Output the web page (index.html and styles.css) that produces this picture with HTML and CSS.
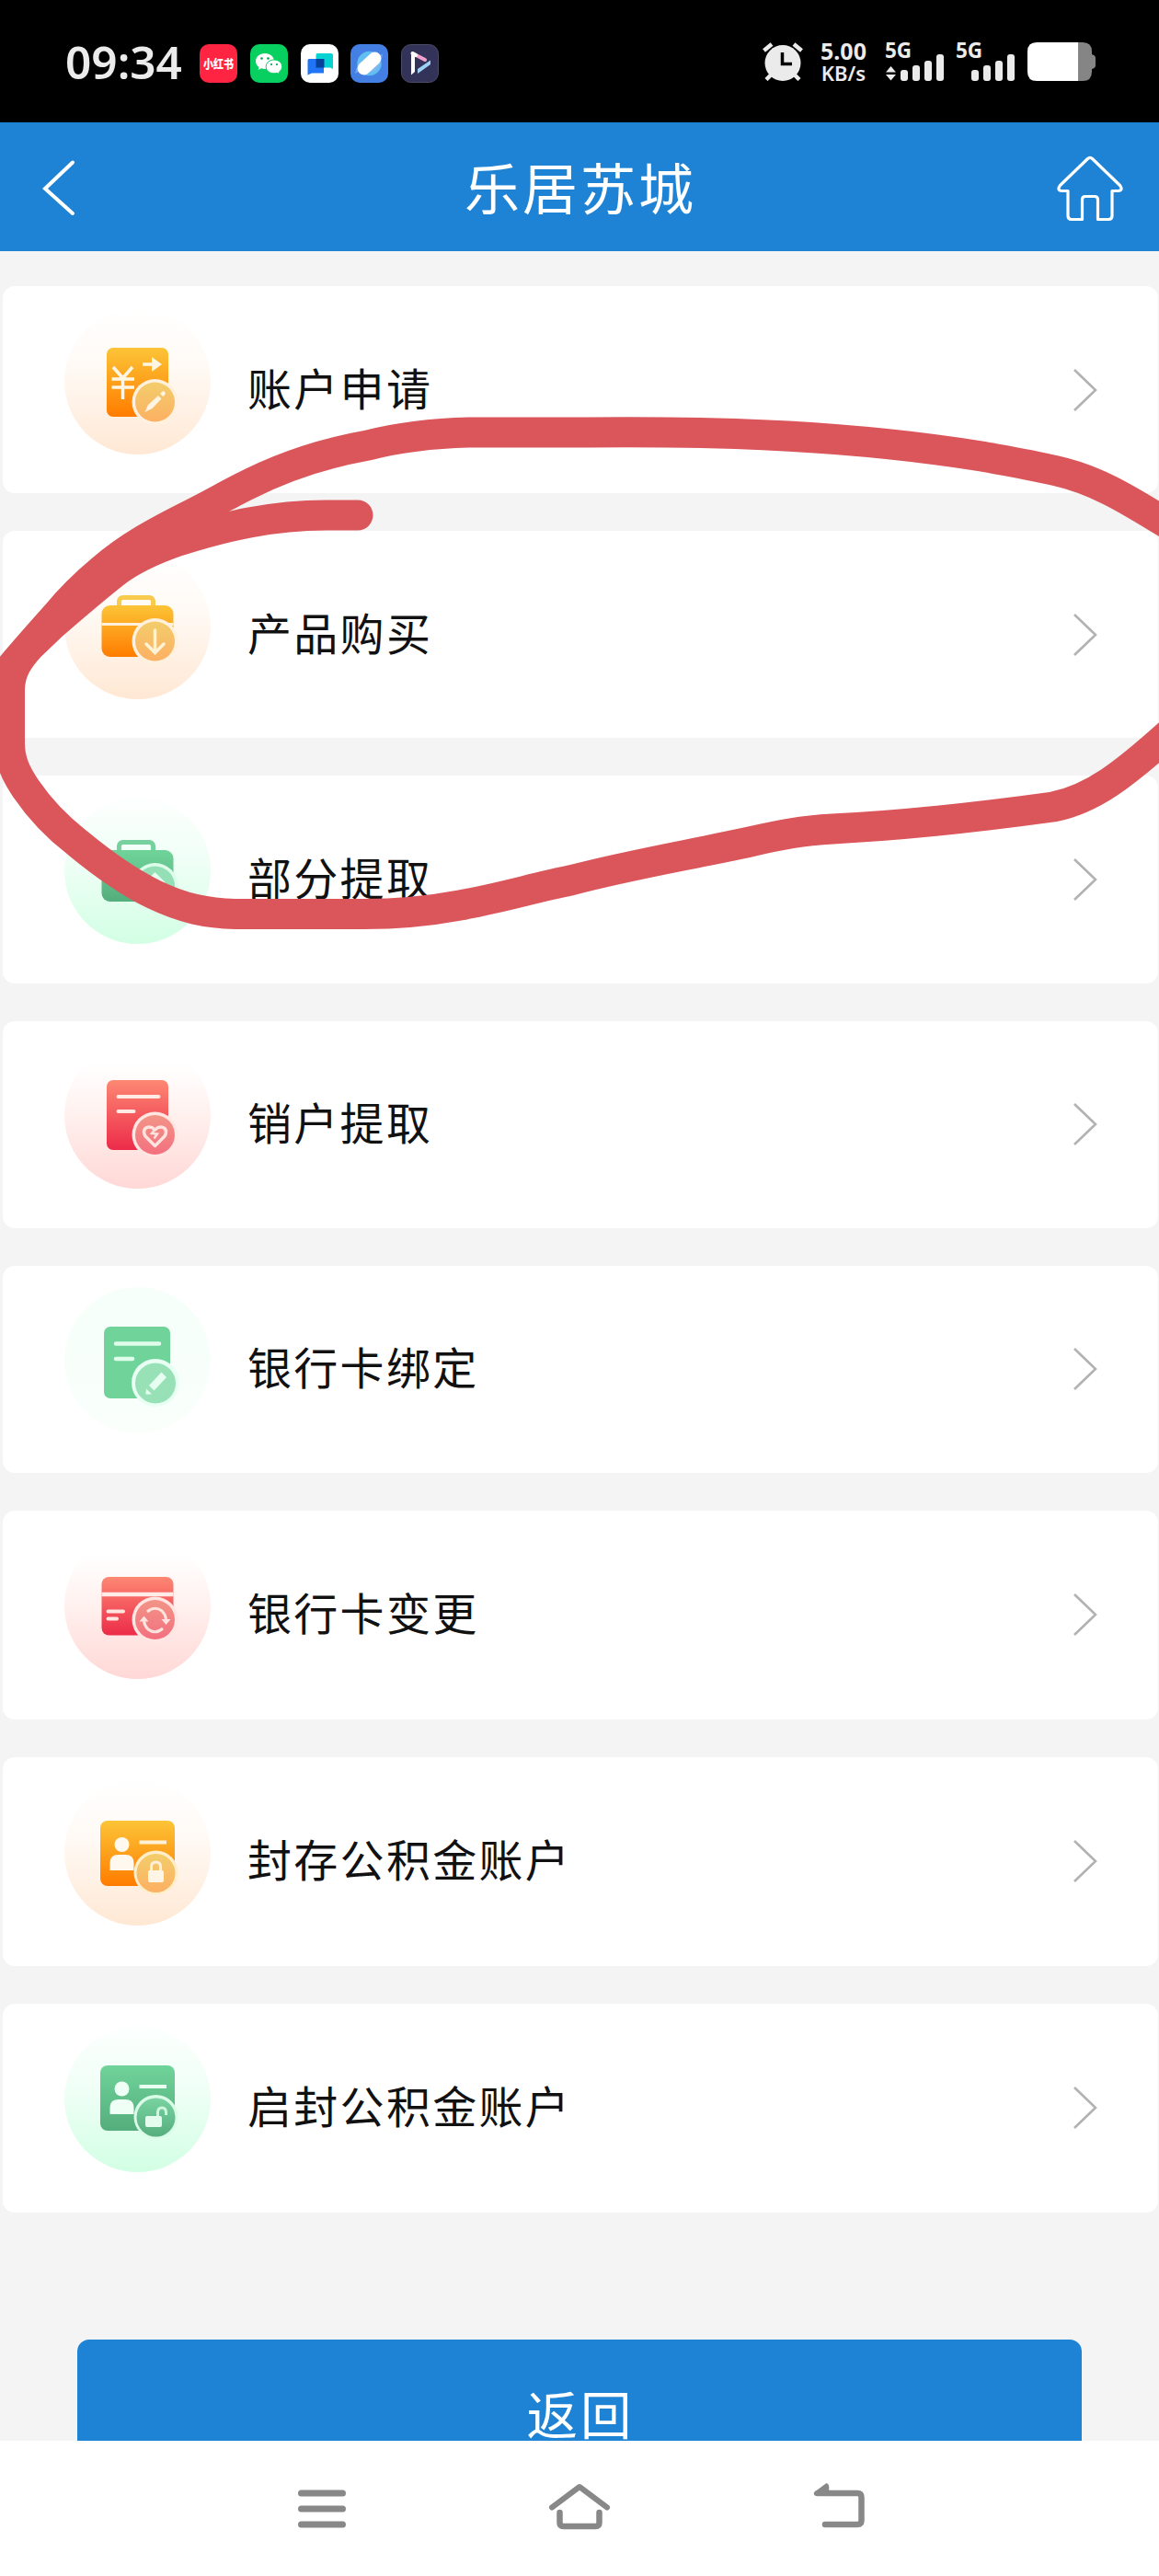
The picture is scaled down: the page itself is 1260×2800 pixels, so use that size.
FILE: index.html
```html
<!DOCTYPE html>
<html lang="zh-CN">
<head>
    <meta charset="UTF-8">
    <meta name="viewport" content="width=device-width, initial-scale=1.0">
    <title>乐居苏城</title>
    <link rel="stylesheet" href="styles.css">
</head>
<body>
    <div class="status-bar">
        <span class="clock">09:34</span>
        <div class="apps">
            <svg class="app" width="41" height="42" viewBox="0 0 41 42">
                <rect width="41" height="42" rx="10" fill="#ff2442"/>
                <text class="app-name" x="20.5" y="26" text-anchor="middle" textLength="33" lengthAdjust="spacingAndGlyphs">小红书</text>
            </svg>
            <svg width="41" height="42" viewBox="0 0 41 42">
                <rect width="41" height="42" rx="10" fill="#07cf60"/>
                <path d="M16 10c-6 0-10 3.800-10 8.500 0 2.700 1.400 5 3.500 6.500l-.8 3 3.400-1.700c1.200.4 2.500.6 3.900.6 6 0 10-3.800 10-8.400S22 10 16 10z" fill="#fff"/>
                <circle cx="12.500" cy="15.500" r="1.300" fill="#07a04c"/><circle cx="19.500" cy="15.500" r="1.300" fill="#07a04c"/>
                <path d="M26 17c-5 0-8.800 3.200-8.800 7.400s3.800 7.400 8.800 7.400c1.100 0 2.200-.2 3.100-.5l2.900 1.400-.7-2.500c2.100-1.400 3.400-3.400 3.400-5.800C34.700 20.200 31 17 26 17z" fill="#fff" stroke="#07cf60"/>
                <circle cx="23" cy="22" r="1.100" fill="#07a04c"/><circle cx="29" cy="22" r="1.100" fill="#07a04c"/>
            </svg>
            <svg width="41" height="42" viewBox="0 0 41 42">
                <rect width="41" height="42" rx="10" fill="#fff"/>
                <path d="M18 10h15q2 0 2 2v15l-3-1.500H16.500V12q0-2 1.500-2z" fill="#06d2d4"/>
                <path d="M9 16h16v15.500H12l-4.500 2V17.500Q7.500 16 9 16z" fill="#1f75f5"/>
                <rect x="16.500" y="16" width="9" height="9.500" fill="#08409c"/>
            </svg>
            <svg width="41" height="42" viewBox="0 0 41 42">
                <rect width="41" height="42" rx="10" fill="#4480e4"/>
                <circle cx="20.500" cy="21" r="13.200" fill="#62bdf0"/>
                <path d="M30 12l5-1q-2 10-6 16T10 29l-5 3q2-10 6-13z" fill="#8fb4f2" opacity=".7"/>
                <rect x="5.500" y="14" width="30" height="14" rx="7" fill="#fff" transform="rotate(-43 20.5 21)"/>
            </svg>
            <svg width="41" height="42" viewBox="0 0 41 42">
                <rect x=".5" y=".5" width="40" height="41" rx="10" fill="#33335a" stroke="#4c4c66"/>
                <path d="M11 11l4 2v17l-4 3.500z" fill="#fff"/>
                <path d="M13.500 10.500L26 17" stroke="#f0a2cc" stroke-width="4" stroke-linecap="round"/>
                <path d="M12.500 10L16 12" stroke="#fff" stroke-width="4" stroke-linecap="round"/>
                <path d="M18 27l14-9.500v4.500L18 32z" fill="#9ed2f5"/>
            </svg>
        </div>
        <div class="indicators">
            <svg class="alarm" width="44" height="42" viewBox="0 0 44 42">
                <g stroke="#ebebeb" stroke-width="4.500">
                    <path d="M1.500 9L10 2M42.500 9L34 2M4 40.500l6-6M40 40.500l-6-6"/>
                </g>
                <circle cx="22" cy="22.500" r="19.500" fill="#ebebeb"/>
                <path d="M21.500 11v12.500h10.500" fill="none" stroke="#000" stroke-width="3.500"/>
            </svg>
            <div class="speed"><span>5.00</span><small>KB/s</small></div>
            <svg class="signal" width="64" height="42" viewBox="0 0 64 42">
                <text class="net" x="-1" y="17">5G</text>
                <path d="M0 32.500L5.500 26l5.500 6.500zM0 35h11l-5.500 6.500z" fill="#ebebeb"/>
                <g fill="#ebebeb">
                    <rect x="16" y="30" width="8" height="12" rx="3"/>
                    <rect x="29" y="25" width="8" height="17" rx="3"/>
                    <rect x="42" y="20" width="8" height="22" rx="3"/>
                    <rect x="55" y="13" width="8" height="29" rx="3"/>
                </g>
            </svg>
            <svg class="signal" width="64" height="42" viewBox="0 0 64 42">
                <text class="net" x="-1" y="17">5G</text>
                <g fill="#ebebeb">
                    <rect x="16" y="30" width="8" height="12" rx="3"/>
                    <rect x="29" y="25" width="8" height="17" rx="3"/>
                    <rect x="42" y="20" width="8" height="22" rx="3"/>
                    <rect x="55" y="13" width="8" height="29" rx="3"/>
                </g>
            </svg>
            <svg class="battery" width="74" height="42" viewBox="0 0 74 42">
                <path d="M55 0h5q10 0 10 10v3q4 1 4 4v8q0 3-4 4v3q0 10-10 10h-5z" fill="#858585"/>
                <path d="M55 0H10Q0 0 0 10v22q0 10 10 10h45z" fill="#fff"/>
            </svg>
        </div>
    </div>

    <header class="header">
        <svg width="40" height="64" viewBox="0 0 40 64">
            <path d="M34 3.500L4 32l30 27" fill="none" stroke="#fff" stroke-width="4" stroke-linecap="round"/>
        </svg>
        <h1>乐居苏城</h1>
        <svg width="74" height="72" viewBox="0 0 74 72">
            <path d="M39.500 3.500q-2.500-2.500-5 0L4.500 32.500q-4 5.500 2 6h6.500v27q0 4 4 4h11.500V48q0-3.500 3.500-3.500h10q3.500 0 3.500 3.500v21.500h11.500q4 0 4-4v-27h6.500q6-.5 2-6z" fill="none" stroke="#fff" stroke-width="3.200" stroke-linejoin="round"/>
        </svg>
    </header>

    <main class="content">
        <!-- gradients shared by the menu icons -->
        <svg class="defs" width="0" height="0">
            <defs>
                <linearGradient id="orange" x1="0" y1="0" x2="0" y2="1"><stop offset="0" stop-color="#fcc437"/><stop offset="1" stop-color="#ff7c00"/></linearGradient>
                <linearGradient id="green" x1="0" y1="0" x2="0" y2="1"><stop offset="0" stop-color="#70d49a"/><stop offset="1" stop-color="#54ad7c"/></linearGradient>
                <linearGradient id="red" x1="0" y1="0" x2="0" y2="1"><stop offset="0" stop-color="#fd8873"/><stop offset="1" stop-color="#ec2b49"/></linearGradient>
                <linearGradient id="orangeBadge" x1="0" y1="0" x2="0" y2="1"><stop offset="0" stop-color="#f3cd6b"/><stop offset="1" stop-color="#fcb063"/></linearGradient>
                <linearGradient id="greenBadge" x1="0" y1="0" x2="0" y2="1"><stop offset="0" stop-color="#78d3a0"/><stop offset="1" stop-color="#56ad7e"/></linearGradient>
                <linearGradient id="redBadge" x1="0" y1="0" x2="0" y2="1"><stop offset="0" stop-color="#f29487"/><stop offset="1" stop-color="#f3707f"/></linearGradient>
            </defs>
        </svg>

        <a class="item">
            <svg class="icon icon-orange" viewBox="0 0 159 159">
                <rect x="46" y="43" width="67" height="75" rx="7" fill="url(#orange)"/>
                <g fill="none" stroke="#fff6e4" stroke-width="3.500">
                    <path d="M53 64l10.500 12L74 64M63.500 75v24M51.500 77H76M51.500 86H76"/>
                    <path d="M85 61h13"/>
                </g>
                <path d="M95 53l11 8-11 8z" fill="#fff6e4"/>
                <circle cx="98.500" cy="102" r="25" fill="#fff1de"/>
                <circle cx="98.500" cy="102" r="21.500" fill="url(#orangeBadge)"/>
                <path d="M87.500 113l3.500-8 11-10 3.500 3.500-10 10.500z" fill="#fff3e2"/>
                <path d="M104 93l2.500-2.500q3.500-1 3 3l-2 2.500z" fill="#fff3e2"/>
            </svg>
            <span class="label">账户申请</span>
            <svg class="arrow" viewBox="0 0 26 46"><path d="M1 1l23 22L1 45"/></svg>
        </a>
        <a class="item">
            <svg class="icon icon-orange" viewBox="0 0 159 159">
                <rect x="59.500" y="48.500" width="37" height="20" rx="4" fill="none" stroke="#f8ca4e" stroke-width="5"/>
                <rect x="40.500" y="57" width="78" height="56" rx="9" fill="url(#orange)"/>
                <path d="M40.500 77.500h78" stroke="#fff1de" stroke-width="3"/>
                <circle cx="98.500" cy="96" r="25" fill="#fff1de"/>
                <circle cx="98.500" cy="96" r="21.500" fill="url(#orangeBadge)"/>
                <path d="M98.500 84v24M89 99l9.500 9.500L108 99" fill="none" stroke="#fff3d6" stroke-width="3.500" stroke-linecap="round"/>
            </svg>
            <span class="label">产品购买</span>
            <svg class="arrow" viewBox="0 0 26 46"><path d="M1 1l23 22L1 45"/></svg>
        </a>
        <a class="item">
            <svg class="icon icon-green" viewBox="0 0 159 159">
                <rect x="59.500" y="48.500" width="37" height="20" rx="4" fill="none" stroke="#76d19f" stroke-width="5"/>
                <rect x="40.500" y="57" width="78" height="56" rx="9" fill="url(#green)"/>
                <circle cx="98.500" cy="96" r="25" fill="#dcfdea"/>
                <circle cx="98.500" cy="96" r="21.500" fill="#94dfb5"/>
                <path d="M98.500 108V84M89 93l9.500-9.500L108 93" fill="none" stroke="#e6fff0" stroke-width="3.500" stroke-linecap="round"/>
            </svg>
            <span class="label">部分提取</span>
            <svg class="arrow" viewBox="0 0 26 46"><path d="M1 1l23 22L1 45"/></svg>
        </a>
        <a class="item">
            <svg class="icon icon-red" viewBox="0 0 159 159">
                <rect x="46" y="41" width="67" height="76" rx="7" fill="url(#red)"/>
                <path d="M58.500 59h44M58.500 75h17" stroke="#ffeae6" stroke-width="4" stroke-linecap="round"/>
                <circle cx="98.500" cy="100.500" r="25" fill="#ffe6e2"/>
                <circle cx="98.500" cy="100.500" r="21.500" fill="url(#redBadge)"/>
                <path d="M98.500 112.500L88 102q-3-5 0-8.500 5-3.500 10.500 1.500 5.500-5 10.500-1.500 3 3.500 0 8.500z" fill="none" stroke="#ffe3df" stroke-width="3.500" stroke-linejoin="round"/>
                <path d="M99 94l-4 5 6 .5-3.500 5" fill="none" stroke="#ffe3df" stroke-width="2.500"/>
            </svg>
            <span class="label">销户提取</span>
            <svg class="arrow" viewBox="0 0 26 46"><path d="M1 1l23 22L1 45"/></svg>
        </a>
        <a class="item">
            <svg class="icon icon-pale" viewBox="0 0 159 159">
                <rect x="43" y="43" width="72" height="78" rx="7" fill="#70d49a"/>
                <path d="M56 61.500h47M56 78h18" stroke="#e0fdec" stroke-width="4.500" stroke-linecap="round"/>
                <circle cx="99" cy="104" r="26" fill="#e9fff3"/>
                <circle cx="99" cy="104.500" r="22" fill="#98e1b7"/>
                <path d="M92 107l13.500-14.500 5.500 5.500-13.500 14.500zM89 110.500l6 6h-6.500z" fill="#e6fff1"/>
            </svg>
            <span class="label">银行卡绑定</span>
            <svg class="arrow" viewBox="0 0 26 46"><path d="M1 1l23 22L1 45"/></svg>
        </a>
        <a class="item item-tall">
            <svg class="icon icon-red" viewBox="0 0 159 159">
                <rect x="40.500" y="48" width="78" height="63.500" rx="8" fill="url(#red)"/>
                <path d="M40.500 67h78" stroke="#ffece9" stroke-width="4.500"/>
                <path d="M47.500 85.500H64M47.500 93.500H57" stroke="#ffe4e0" stroke-width="4" stroke-linecap="round"/>
                <circle cx="98.500" cy="94.500" r="25" fill="#ffe6e2"/>
                <circle cx="98.500" cy="94.500" r="21.500" fill="url(#redBadge)"/>
                <path d="M90 86q8-7 16-1 4 4 4.500 9M107 104q-8 7-16 1-4-4-4.500-9" fill="none" stroke="#ffe3df" stroke-width="3"/>
                <path d="M105.500 94h10l-5 6zM81.500 96.500h10l-5-6z" fill="#ffe3df"/>
            </svg>
            <span class="label">银行卡变更</span>
            <svg class="arrow" viewBox="0 0 26 46"><path d="M1 1l23 22L1 45"/></svg>
        </a>
        <a class="item item-tall">
            <svg class="icon icon-orange" viewBox="0 0 159 159">
                <rect x="39" y="45" width="81" height="71" rx="8" fill="url(#orange)"/>
                <circle cx="62.500" cy="71" r="8" fill="#fff8ee"/>
                <path d="M49.500 99v-8q0-9 9-9h8q9 0 9 9v8z" fill="#fff8ee"/>
                <path d="M81.500 68.500h29.500" stroke="#fff1d8" stroke-width="4"/>
                <circle cx="99.500" cy="101.500" r="24" fill="#ffeec8"/>
                <circle cx="99.500" cy="102" r="21" fill="url(#orangeBadge)"/>
                <rect x="91" y="99" width="17" height="13" rx="2" fill="#fff5e6"/>
                <path d="M94.500 99v-4q0-5 5-5t5 5v4" fill="none" stroke="#fff0d8" stroke-width="3"/>
            </svg>
            <span class="label">封存公积金账户</span>
            <svg class="arrow" viewBox="0 0 26 46"><path d="M1 1l23 22L1 45"/></svg>
        </a>
        <a class="item item-tall">
            <svg class="icon icon-green" viewBox="0 0 159 159">
                <rect x="39" y="43" width="81" height="71" rx="8" fill="url(#green)"/>
                <circle cx="62.500" cy="68.500" r="8" fill="#effff6"/>
                <path d="M49.500 96v-7q0-9 9-9h8q9 0 9 9v7z" fill="#effff6"/>
                <path d="M81.500 66h29.500" stroke="#e6fdf0" stroke-width="4"/>
                <circle cx="99.500" cy="99" r="24" fill="#d9fbe7"/>
                <circle cx="99.500" cy="99.500" r="21" fill="url(#greenBadge)"/>
                <rect x="88" y="98" width="18" height="12" rx="2" fill="#e4fcee"/>
                <path d="M101.500 98v-4q0-5 4.500-5t4.500 5v3" fill="none" stroke="#cdf6de" stroke-width="3"/>
            </svg>
            <span class="label">启封公积金账户</span>
            <svg class="arrow" viewBox="0 0 26 46"><path d="M1 1l23 22L1 45"/></svg>
        </a>

        <button class="btn-back">返回</button>
    </main>

    <nav class="nav-bar">
        <svg width="52" height="50" viewBox="0 0 52 50">
            <path d="M3.500 11h45M3.500 28h45M3.500 45h45" stroke="#888" stroke-width="7" stroke-linecap="round"/>
        </svg>
        <svg width="68" height="52" viewBox="0 0 68 52">
            <path d="M4 27.500L34 5l30 22.500" fill="none" stroke="#888" stroke-width="6" stroke-linecap="round" stroke-linejoin="round"/>
            <path d="M12.500 33v11q0 4 4 4h35q4 0 4-4V33" fill="none" stroke="#888" stroke-width="6.500" stroke-linecap="round"/>
        </svg>
        <svg width="56" height="50" viewBox="0 0 56 50">
            <path d="M5 11h43q4.500 0 4.500 4.500v25q0 4.500-4.500 4.500H13" fill="none" stroke="#888" stroke-width="6.500" stroke-linecap="round"/>
            <path d="M1 10L14.500 0q4 1 2.500 9l-1 5H4q-4 0-3-4z" fill="#888"/>
        </svg>
    </nav>

    <!-- hand-drawn marker -->
    <svg class="marker" width="1260" height="2800" viewBox="0 0 1260 2800">
        <path d="M389 560H355C295 560 245 572 194 588C165 598 142 609 124 623C100 642 78 661 56 680L33 702C20 716 10.500 730 10.500 750V808C10.500 828 18 842 28 857C43 879 62 899 84 916C113 940 138 958 167 972C198 987 225 993.500 262 993.500H395C430 993.500 468 990 500 984C545 976 580 965 620 957C680 941 740 931 813 915.500C850 907 872 903 905 901C985 897 1065 888 1145 877C1187 869 1222 842 1275 794"/>
        <path d="M12 725C28 706 44 688 61 669C76 651 92 635 110 620C140 594 172 577 208 559C228 549 247 538 267 528C312 505 355 492 400 484C435 475 470 471 510 470H640C700 469.500 750 470 800 471.500C900 475 980 482 1067 496C1095 501 1120 505 1147 511.500C1190 521 1222 540 1275 573"/>
    </svg>
</body>
</html>
```

FILE: styles.css
```css
* {
    box-sizing: border-box;
}
body {
    position: relative;
    display: flex;
    flex-direction: column;
    width: 1260px;
    height: 2800px;
    margin: 0;
    overflow: hidden;
    background: #f4f4f4;
    color: #111;
    font-family: "Noto Sans CJK SC", sans-serif;
}
svg {
    display: block;
    flex: none;
}

/* status bar */
.status-bar {
    display: flex;
    align-items: center;
    height: 133px;
    padding: 4px 69px 0 71px;
    background: #000;
    color: #ebebeb;
    font-family: "Noto Sans", sans-serif;
}
.clock {
    width: 146px;
    margin-bottom: 4px;
    font-size: 49.5px;
    font-weight: 600;
    line-height: 60px;
}
.apps {
    display: flex;
    gap: 13.8px;
}
.app {
    overflow: visible;
}
.app-name {
    fill: #fff;
    font-family: "Noto Sans CJK SC", sans-serif;
    font-size: 13px;
    font-weight: 900;
}
.indicators {
    display: flex;
    margin-left: auto;
}
.speed {
    display: flex;
    flex-direction: column;
    align-items: center;
    width: 54px;
    margin: -3px 19px 0 17px;
    font-size: 25px;
    font-weight: 700;
    line-height: 24px;
}
.speed small {
    font-size: 22px;
    font-weight: 600;
}
.signal {
    margin-right: 13px;
    overflow: visible;
}
.net {
    fill: #ebebeb;
    font-size: 22.5px;
    font-weight: 700;
}

/* title bar */
.header {
    display: flex;
    align-items: center;
    justify-content: space-between;
    height: 140px;
    padding: 3px 38px 0 45px;
    background: #1e82d5;
    color: #fff;
}
.header h1 {
    margin: 0 0 6px 29px;
    font-size: 60px;
    font-weight: 400;
    letter-spacing: 3px;
    line-height: 80px;
}

/* menu list */
.content {
    display: flex;
    flex-direction: column;
    gap: 41px;
    height: 2380px;
    padding: 38px 1px 0 3px;
    overflow: hidden;
}
.defs {
    position: absolute;
}
.item {
    display: flex;
    flex: none;
    align-items: center;
    height: 225.2px;
    padding: 0 66px 0 67px;
    border-radius: 13px;
    background: #fff;
}
.item-tall {
    height: 227px;
}
.icon {
    width: 159px;
    height: 159px;
    margin-bottom: 19px;
    border-radius: 50%;
}
.icon-orange {
    background: linear-gradient(#fff, #fffaf5 40%, #ffe8d4);
}
.icon-green {
    background: linear-gradient(#fdfffe, #effff6 45%, #d2ffe4);
}
.icon-red {
    background: linear-gradient(#fff 15%, #fff3f1 45%, #ffd8d6);
}
.icon-pale {
    background: linear-gradient(#f6fffa, #fafffc);
}
.label {
    flex: 1;
    margin: 0 0 8px 40px;
    font-size: 48px;
    letter-spacing: 2.3px;
    line-height: 60px;
}
.arrow {
    width: 26px;
    height: 46px;
    fill: none;
    stroke: #b2b2b2;
    stroke-width: 2.6;
}
.btn-back {
    flex: none;
    height: 166px;
    margin: 97px 83px 0 81px;
    padding: 0 0 7px 2px;
    border: 0;
    border-radius: 13px;
    background: #1e82d5;
    color: #fff;
    font-family: inherit;
    font-size: 55.5px;
    letter-spacing: 3px;
}

/* system navigation */
.nav-bar {
    display: flex;
    align-items: center;
    justify-content: center;
    gap: 220px;
    height: 147px;
    padding: 0 0 5px 3px;
    background: #fff;
}

.marker {
    position: absolute;
    top: 0;
    left: 0;
    fill: none;
    stroke: #db565a;
    stroke-width: 33;
    stroke-linecap: round;
    stroke-linejoin: round;
    pointer-events: none;
}
```
